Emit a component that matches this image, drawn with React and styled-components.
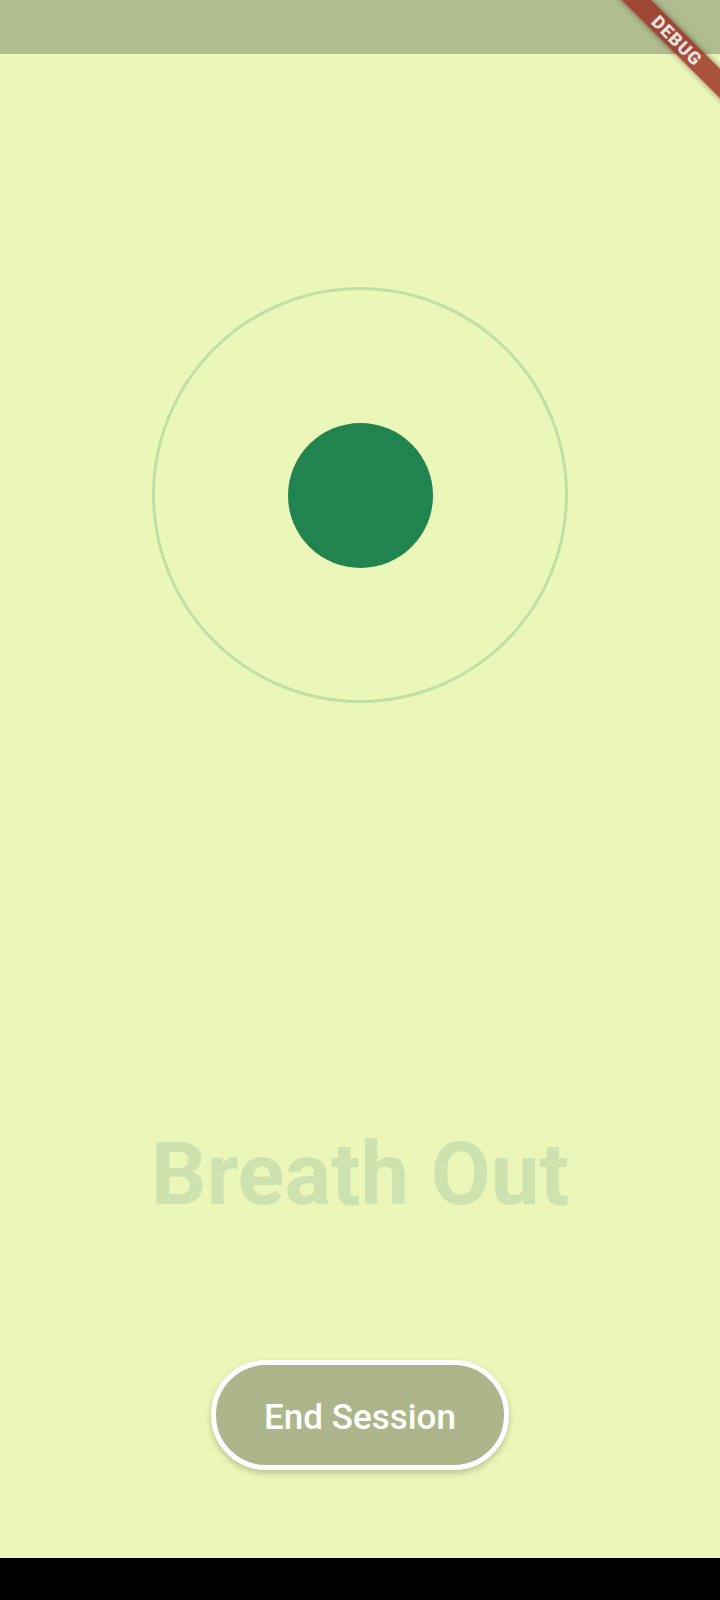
import React from "react";
import styled, { createGlobalStyle } from "styled-components";

const GlobalStyle = createGlobalStyle`
  html, body {
    margin: 0;
    padding: 0;
    background: #ebf7b9;
  }
  * {
    box-sizing: border-box;
  }
`;

const Screen = styled.div`
  width: 720px;
  height: 1600px;
  display: flex;
  flex-direction: column;
  background: #ebf7b9;
  font-family: Roboto, "Noto Sans", sans-serif;
  position: relative;
  overflow: hidden;
`;

const StatusBar = styled.div`
  height: 54px;
  flex-shrink: 0;
  background: #b2bd8f;
`;

const Main = styled.main`
  flex: 1;
  display: flex;
  flex-direction: column;
  align-items: center;
  padding-top: 233px;
`;

const Ring = styled.div`
  width: 416px;
  height: 416px;
  border-radius: 50%;
  border: 3px solid #bfdfa3;
  display: flex;
  align-items: center;
  justify-content: center;
`;

const Dot = styled.div`
  width: ${(p) => p.size}px;
  height: ${(p) => p.size}px;
  border-radius: 50%;
  background: #21844f;
`;

const Phase = styled.h1`
  margin: 427px 0 0;
  font-size: 87px;
  line-height: 88px;
  font-weight: 700;
  color: #cde2af;
  white-space: nowrap;
`;

const EndButton = styled.button`
  margin-top: 142px;
  height: 110px;
  padding: 4px 48px 0;
  border-radius: 55px;
  border: 5px solid #ffffff;
  background: #adb58a;
  color: #ffffff;
  font-family: Roboto, "Noto Sans", sans-serif;
  font-size: 35px;
  font-weight: 500;
  box-shadow: 0 3px 6px rgba(0, 0, 0, 0.22);
  display: flex;
  align-items: center;
  justify-content: center;
`;

const NavBar = styled.div`
  height: 42px;
  flex-shrink: 0;
  background: #000000;
`;

const BannerCorner = styled.div`
  position: absolute;
  top: 0;
  right: 0;
  width: 110px;
  height: 110px;
  overflow: hidden;
  pointer-events: none;
`;

const Ribbon = styled.div`
  position: absolute;
  left: -33px;
  top: 30px;
  width: 200px;
  height: 21px;
  transform: rotate(45deg);
  background: rgba(155, 40, 30, 0.8);
  box-shadow: 0 0 6px rgba(0, 0, 0, 0.45);
  color: #e8e2e0;
  font-family: Roboto, "Noto Sans", sans-serif;
  font-weight: 900;
  font-size: 18px;
  line-height: 21px;
  letter-spacing: 1px;
  text-align: center;
`;

export default function App() {
  return (
    <>
      <GlobalStyle />
      <Screen>
        <StatusBar />
        <Main>
          <Ring>
            <Dot size={145} />
          </Ring>
          <Phase>Breath Out</Phase>
          <EndButton>End Session</EndButton>
        </Main>
        <NavBar />
        <BannerCorner>
          <Ribbon>DEBUG</Ribbon>
        </BannerCorner>
      </Screen>
    </>
  );
}
